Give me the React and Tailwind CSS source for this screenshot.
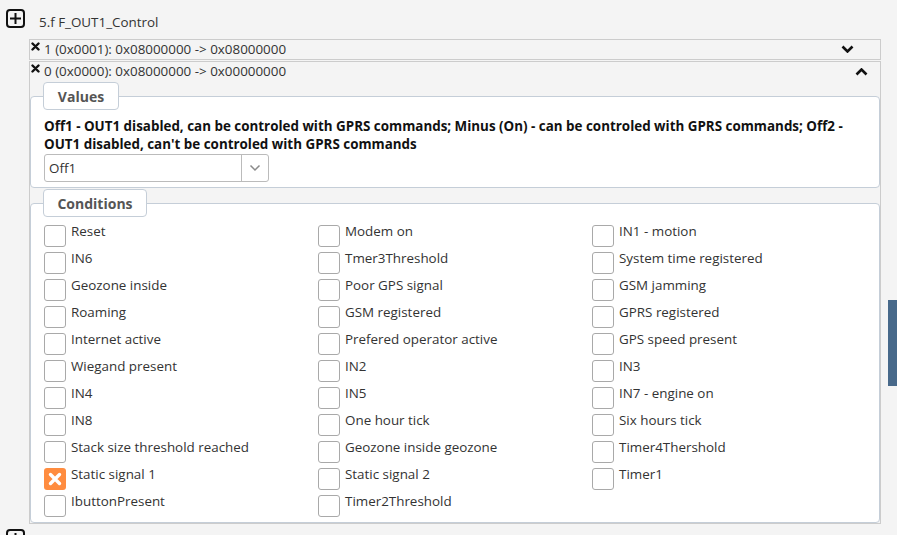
import React from 'react'

const conditions = [
  ['Reset', 'Modem on', 'IN1 - motion'],
  ['IN6', 'Tmer3Threshold', 'System time registered'],
  ['Geozone inside', 'Poor GPS signal', 'GSM jamming'],
  ['Roaming', 'GSM registered', 'GPRS registered'],
  ['Internet active', 'Prefered operator active', 'GPS speed present'],
  ['Wiegand present', 'IN2', 'IN3'],
  ['IN4', 'IN5', 'IN7 - engine on'],
  ['IN8', 'One hour tick', 'Six hours tick'],
  ['Stack size threshold reached', 'Geozone inside geozone', 'Timer4Thershold'],
  ['Static signal 1', 'Static signal 2', 'Timer1'],
  ['IbuttonPresent', 'Timer2Threshold', null],
]

function PlusBox() {
  return (
    <div className="w-[19px] h-[19px] rounded-[4px] border-2 border-[#111] flex items-center justify-center">
      <svg width="13" height="13" viewBox="0 0 13 13">
        <path d="M6.5 1v11M1 6.5h11" stroke="#111" strokeWidth="2" />
      </svg>
    </div>
  )
}

function XMark() {
  return (
    <svg width="9" height="9" viewBox="0 0 9 9" className="shrink-0">
      <path d="M1.5 1.5l6 6M7.5 1.5l-6 6" stroke="#111" strokeWidth="2.4" strokeLinecap="round" />
    </svg>
  )
}

function Chevron({ up }) {
  return (
    <svg width="13" height="8" viewBox="0 0 13 8">
      <path d={up ? 'M1.5 6.5l5-5 5 5' : 'M1.5 1.5l5 5 5-5'} stroke="#111" strokeWidth="2.6" fill="none" />
    </svg>
  )
}

function Checkbox({ label, checked }) {
  return (
    <div className="flex items-start h-[27px]">
      {checked ? (
        <div className="w-[22px] h-[22px] rounded-[3px] bg-[#ff8c3f] flex items-center justify-center shrink-0">
          <svg width="14" height="14" viewBox="0 0 14 14">
            <path d="M2.5 2.5l9 9M11.5 2.5l-9 9" stroke="#fff" strokeWidth="3.4" strokeLinecap="round" />
          </svg>
        </div>
      ) : (
        <div className="w-[22px] h-[22px] rounded-[3px] border border-[#a9a9a9] bg-white shrink-0" />
      )}
      <span className="ml-[5px] -mt-[3px] leading-[18px] text-[#333]">{label}</span>
    </div>
  )
}

function Legend({ title, width }) {
  return (
    <div
      className={`relative z-10 ml-[13px] -mb-[14px] h-[28px] ${width} rounded-[4px] border border-[#c5ced8] bg-white flex items-center justify-center text-[14px] font-bold text-[#555]`}
    >
      {title}
    </div>
  )
}

export default function App() {
  return (
    <div className="flex min-h-[535px] bg-[#f4f4f4] font-['Open_Sans',sans-serif] text-[13.4px] text-[#333] overflow-hidden">
      <div className="flex-1 pt-[9px]">
        <div className="flex items-start h-[19px] pl-[6px]">
          <PlusBox />
          <span className="ml-[14px] mt-[4px] leading-[18px]">5.f F_OUT1_Control</span>
        </div>

        <div className="ml-[29px] mr-[7px] mt-[11px]">
          <div className="h-[21px] border border-[#cccccc] flex items-start pl-[1px]">
            <div className="mt-[2px]"><XMark /></div>
            <span className="ml-[4px] leading-[18px]">1 (0x0001): 0x08000000 -&gt; 0x08000000</span>
            <div className="ml-auto mr-[26px] mt-[5px]"><Chevron /></div>
          </div>

          <div className="mt-[1px] border border-[#cccccc]">
            <div className="h-[20px] flex items-start pl-[1px]">
              <div className="mt-[2px]"><XMark /></div>
              <span className="ml-[4px] leading-[18px]">0 (0x0000): 0x08000000 -&gt; 0x00000000</span>
              <div className="ml-auto mr-[12px] mt-[6px]"><Chevron up /></div>
            </div>

            <Legend title="Values" width="w-[76px]" />
            <div className="border border-[#c5ced8] rounded-[4px] bg-white pt-[20px] pb-[5px] px-[13px]">
              <p className="font-bold text-[#111] leading-[18px] pr-[20px]">
                Off1 - OUT1 disabled, can be controled with GPRS commands; Minus (On) - can be controled with GPRS commands; Off2 - OUT1 disabled, can't be controled with GPRS commands
              </p>
              <div className="mt-[1px] w-[225px] h-[28px] border border-[#bbbbbb] rounded-[3px] flex">
                <span className="flex-1 pl-[4px] leading-[26px] text-[#333]">Off1</span>
                <div className="w-[27px] border-l border-[#bbbbbb] flex items-center justify-center">
                  <svg width="12" height="8" viewBox="0 0 12 8">
                    <path d="M1.5 1.5l4.5 4.5 4.5-4.5" stroke="#8a8a8a" strokeWidth="1.5" fill="none" />
                  </svg>
                </div>
              </div>
            </div>

            <div className="mt-[1px]">
              <Legend title="Conditions" width="w-[104px]" />
              <div className="border border-[#c5ced8] rounded-[4px] bg-white pt-[21px] px-[13px]">
                <div className="grid grid-cols-3">
                  {conditions.map((row, i) =>
                    row.map((label, j) =>
                      label ? (
                        <Checkbox key={`${i}-${j}`} label={label} checked={label === 'Static signal 1'} />
                      ) : (
                        <div key={`${i}-${j}`} />
                      )
                    )
                  )}
                </div>
              </div>
            </div>
          </div>
        </div>

        <div className="mt-[5px] pl-[6px]">
          <PlusBox />
        </div>
      </div>
      <div className="w-[9px] shrink-0">
        <div className="mt-[300px] h-[86px] bg-[#48698a]" />
      </div>
    </div>
  )
}
